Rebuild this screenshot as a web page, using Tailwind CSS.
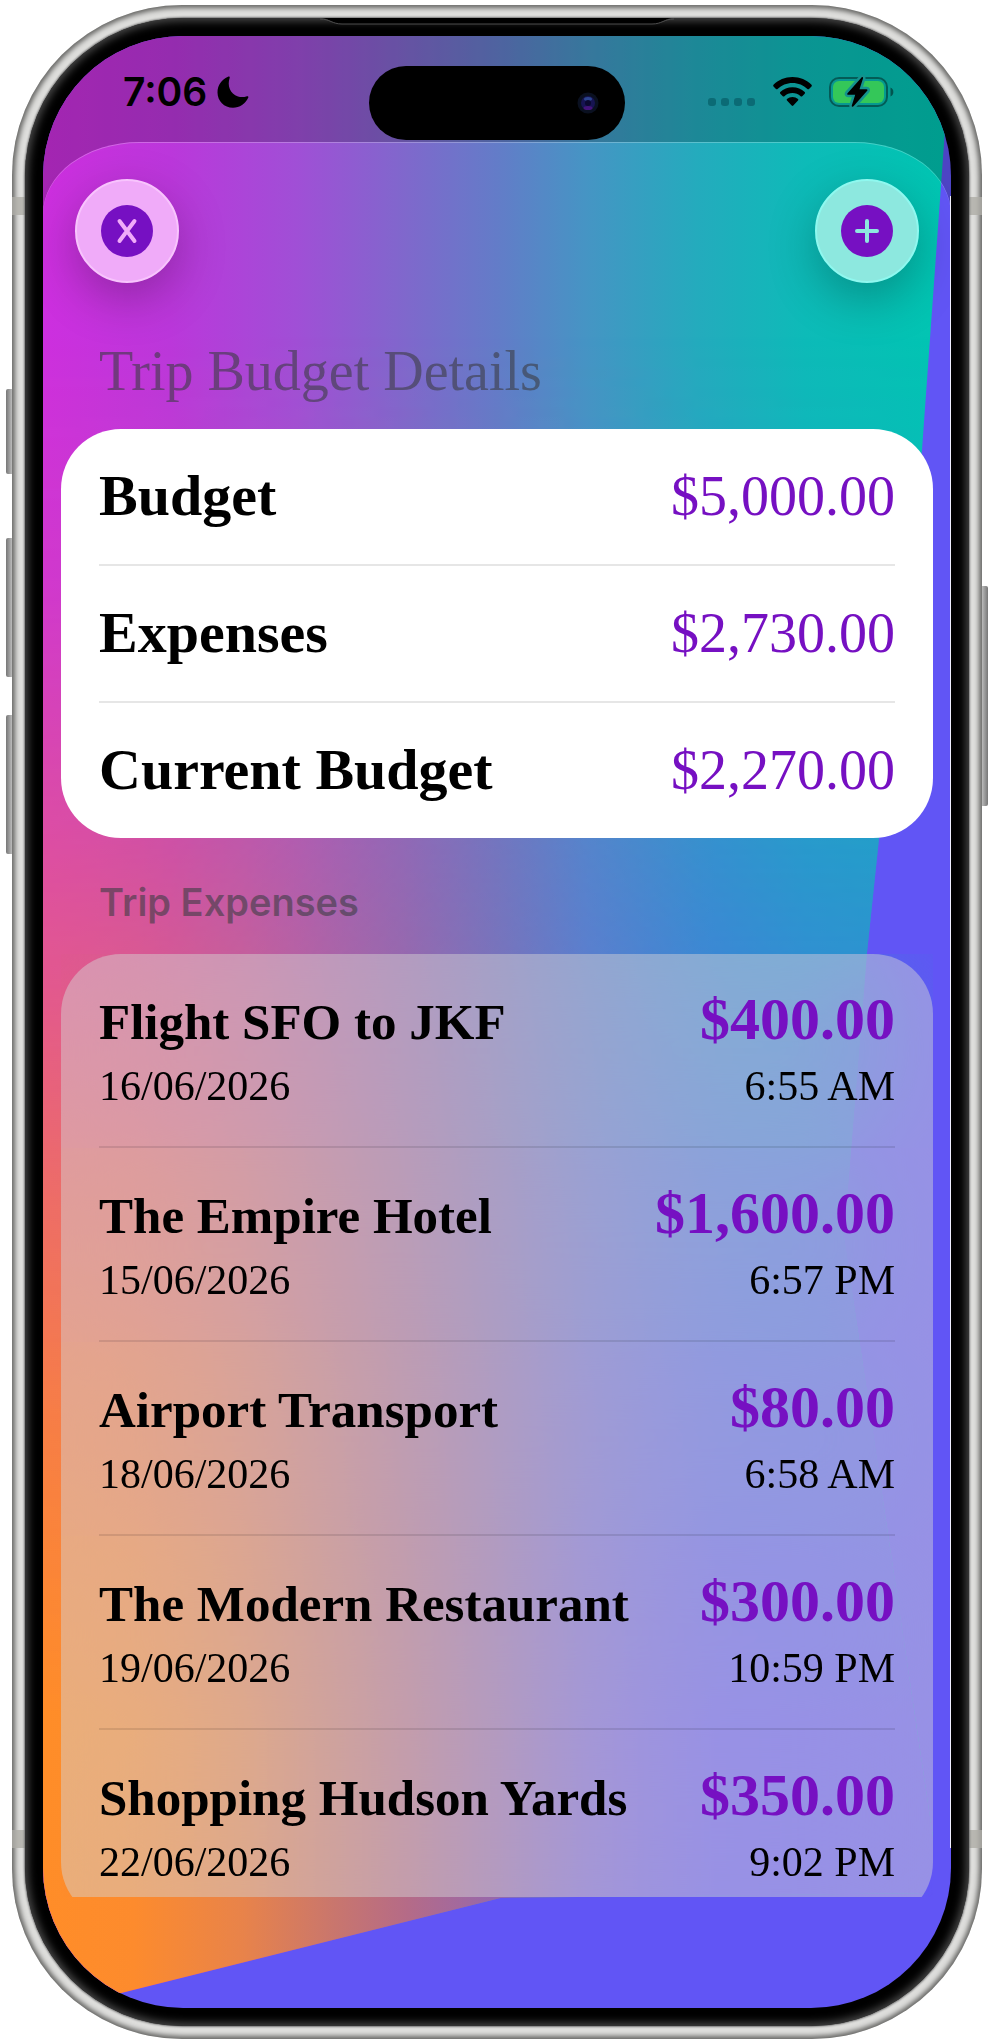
<!DOCTYPE html>
<html lang="en">
<head>
    <meta charset="UTF-8">
    <meta name="viewport" content="width=device-width, initial-scale=1.0">
    <title>Trip Budget Details</title>
    <script src="https://cdn.jsdelivr.net/npm/@tailwindcss/browser@4"></script>
</head>
<body class="bg-white font-['Liberation_Serif',serif] text-black">
    <main class="mx-auto w-full max-w-5xl px-3 pt-[5px] pb-1.5">
        <!-- Phone frame -->
        <div class="relative rounded-[170px] bg-[#dededc] p-[13px] shadow-[inset_0_0_5px_3px_#666664]">
            <!-- Side buttons -->
            <span class="absolute top-[384px] -left-1.5 h-[85px] w-1.5 rounded-l-xs bg-linear-to-r from-[#777] to-[#bbb]"></span>
            <span class="absolute top-[533px] -left-1.5 h-[139px] w-1.5 rounded-l-xs bg-linear-to-r from-[#777] to-[#bbb]"></span>
            <span class="absolute top-[710px] -left-1.5 h-[139px] w-1.5 rounded-l-xs bg-linear-to-r from-[#777] to-[#bbb]"></span>
            <span class="absolute top-[581px] -right-1.5 h-[220px] w-1.5 rounded-r-xs bg-linear-to-l from-[#777] to-[#bbb]"></span>
            <!-- Antenna bands -->
            <span class="absolute inset-x-0 top-[192px] h-[18px] bg-[#aeada6]/80"></span>
            <span class="absolute inset-x-0 bottom-[191px] h-[18px] bg-[#aeada6]/80"></span>

            <div class="relative rounded-[158px] bg-black p-[18px] shadow-[0_0_2px_1px_#777,inset_0_0_8px_3px_#4a4a4a]">
                <!-- Speaker slit -->
                <svg class="absolute top-0 left-1/2 -translate-x-1/2" width="354" height="8" viewBox="0 0 354 8" fill="none">
                    <path d="M2 0C10 1 12 6 22 6H332C342 6 344 1 352 0Z" fill="#000"/>
                    <path d="M0 1C10 1 12 6 22 6H332C342 6 344 1 354 1" stroke="#4d4d4d"/>
                </svg>

                <div class="relative overflow-hidden rounded-[140px] bg-[#6155f5]">
                    <!-- Mesh background -->
                    <svg class="absolute inset-0 size-full" viewBox="0 0 907 1971" preserveAspectRatio="none">
                        <defs>
                            <linearGradient id="meshTop">
                                <stop offset="0" stop-color="#cd2fdf"/>
                                <stop offset=".14" stop-color="#bb37db"/>
                                <stop offset=".28" stop-color="#a04fd6"/>
                                <stop offset=".4" stop-color="#7f68cc"/>
                                <stop offset=".5" stop-color="#637cc8"/>
                                <stop offset=".6" stop-color="#4595c4"/>
                                <stop offset=".72" stop-color="#24abbd"/>
                                <stop offset=".84" stop-color="#0dbbb8"/>
                                <stop offset="1" stop-color="#00c6b2"/>
                            </linearGradient>
                            <linearGradient id="meshBottom">
                                <stop offset="0" stop-color="#ff8d28"/>
                                <stop offset=".1" stop-color="#fd8b2d"/>
                                <stop offset=".22" stop-color="#e8834a"/>
                                <stop offset=".32" stop-color="#c9766d"/>
                                <stop offset=".4" stop-color="#b56b87"/>
                                <stop offset=".5" stop-color="#9668ac"/>
                                <stop offset=".6" stop-color="#7861dc"/>
                                <stop offset=".74" stop-color="#6155f5"/>
                                <stop offset="1" stop-color="#6155f5"/>
                            </linearGradient>
                            <linearGradient id="meshFade" x1="0" y1="0" x2="0" y2="1">
                                <stop offset=".15" stop-color="#fff" stop-opacity="0"/>
                                <stop offset=".28" stop-color="#fff" stop-opacity=".1"/>
                                <stop offset=".38" stop-color="#fff" stop-opacity=".28"/>
                                <stop offset=".48" stop-color="#fff" stop-opacity=".44"/>
                                <stop offset=".59" stop-color="#fff" stop-opacity=".66"/>
                                <stop offset=".7" stop-color="#fff" stop-opacity=".84"/>
                                <stop offset=".85" stop-color="#fff" stop-opacity="1"/>
                            </linearGradient>
                            <mask id="meshMask">
                                <rect width="907" height="1971" fill="url(#meshFade)"/>
                            </mask>
                            <clipPath id="meshShape">
                                <path d="M0 0H907L901 94L878 414L835 803L823 917L800 1200L889 1800V1856L457 1861L74 1957L0 1975Z"/>
                            </clipPath>
                        </defs>
                        <g clip-path="url(#meshShape)">
                            <rect width="907" height="1971" fill="url(#meshTop)"/>
                            <rect width="907" height="1971" fill="url(#meshBottom)" mask="url(#meshMask)"/>
                        </g>
                    </svg>

                    <!-- Status bar -->
                    <header class="relative z-10 grid h-[106px] grid-cols-[1fr_256px_1fr] items-start">
                        <div class="flex h-[112px] items-center gap-2.5 pl-20 font-['Inter',sans-serif] text-[39px] font-semibold">
                            <span>7:06</span>
                            <svg width="32" height="32" viewBox="0 0 32 32">
                                <path d="M11.500.6C12.300.2 13 .9 12.700 1.800C10 9.500 13 18 21 20.500C24 21.400 27 21.200 30 20.200C31 19.900 31.700 20.600 31.300 21.500C28.500 27.800 22.500 31.700 16 31.700C7 31.700.5 25 .5 16.500C.5 9.500 4.500 3.500 11.500.6Z"/>
                            </svg>
                        </div>
                        <div class="mt-[30px] flex h-[74px] items-center justify-end rounded-full bg-black pr-[26px]">
                            <svg width="22" height="22" viewBox="0 0 22 22">
                                <circle cx="11" cy="11" r="10.500" fill="#0a1020"/>
                                <circle cx="11" cy="11" r="7" fill="#171452"/>
                                <ellipse cx="11" cy="7" rx="4" ry="2" fill="#2c4590"/>
                                <ellipse cx="11" cy="16" rx="4.500" ry="2" fill="#43137a"/>
                                <circle cx="11" cy="11" r="3" fill="#0b0930"/>
                            </svg>
                        </div>
                        <div class="flex h-[112px] items-center justify-end pr-[57px]">
                            <div class="mt-5 mr-[18px] flex gap-[5px]">
                                <span class="size-2 rounded-[3px] bg-[#0b6b75]"></span>
                                <span class="size-2 rounded-[3px] bg-[#0b6b75]"></span>
                                <span class="size-2 rounded-[3px] bg-[#0b6b75]"></span>
                                <span class="size-2 rounded-[3px] bg-[#0b6b75]"></span>
                            </div>
                            <svg class="mr-[17px]" width="39" height="30" viewBox="0 0 39 30">
                                <path d="M19.500 0C27 0 33.700 3 38.500 7.800C39 8.300 39 8.900 38.500 9.400L36 11.900C35.500 12.400 34.900 12.400 34.400 11.900C30.500 8.200 25.300 5.900 19.500 5.900S8.500 8.200 4.600 11.900C4.100 12.400 3.500 12.400 3 11.900L.5 9.400C0 8.900 0 8.300.5 7.800C5.300 3 12 0 19.500 0Z"/>
                                <path d="M19.500 10.200C24.200 10.200 28.500 12 31.700 15.100C32.200 15.600 32.200 16.200 31.700 16.700L29.200 19.200C28.700 19.700 28.100 19.700 27.600 19.200C25.400 17.200 22.600 16 19.500 16S13.600 17.200 11.400 19.200C10.900 19.700 10.300 19.700 9.800 19.200L7.300 16.700C6.800 16.200 6.800 15.600 7.300 15.100C10.500 12 14.800 10.200 19.500 10.200Z"/>
                                <path d="M19.500 20C21.500 20 23.500 20.800 25 22C25.500 22.500 25.500 23.100 25 23.600L20.300 28.600C19.800 29.100 19.200 29.100 18.700 28.600L14 23.600C13.500 23.100 13.500 22.500 14 22C15.500 20.800 17.500 20 19.500 20Z"/>
                            </svg>
                            <svg width="65" height="34" viewBox="0 0 65 34">
                                <rect x="1" y="3" width="57" height="28" rx="9" fill="none" stroke="#000" stroke-opacity=".4" stroke-width="2"/>
                                <path d="M61.500 12.500C65.300 13.500 65.300 20.500 61.500 21.500Z" fill-opacity=".45"/>
                                <rect x="4" y="6" width="51" height="22" rx="6" fill="#34c759"/>
                                <path d="M32.500 2.500L18.500 18.200C17.900 19 18.200 19.800 19.200 19.800H26.200L22.800 30.500C22.500 31.800 23.700 32.200 24.500 31.300L38.200 15.800C38.800 15 38.500 14.200 37.500 14.200H30.500L34 3.500C34.300 2.200 33.300 1.600 32.500 2.500Z" stroke="#14918e" stroke-width="5" paint-order="stroke"/>
                            </svg>
                        </div>
                    </header>

                    <!-- Sheet, the outer shadow dims the strip behind it -->
                    <section class="relative rounded-t-[96px_72px] px-[18px] pt-[37px] pb-[111px] shadow-[inset_0_1px_0_rgba(255,255,255,0.25),0_0_0_200px_rgba(0,0,0,0.2)]">
                        <div class="flex justify-between px-3.5">
                            <button type="button" aria-label="Close" class="flex size-[104px] items-center justify-center rounded-full border-2 border-[#f8c4fd] bg-[#f0abf9] shadow-[0_16px_48px_rgba(0,0,0,0.25)]">
                                <svg width="52" height="52" viewBox="0 0 52 52" fill="none" stroke="#f0abf9" stroke-width="4" stroke-linecap="round">
                                    <circle cx="26" cy="26" r="26" fill="#7610c2" stroke="none"/>
                                    <path d="M18.500 16L33.500 36M33.500 16L18.500 36"/>
                                </svg>
                            </button>
                            <button type="button" aria-label="Add expense" class="flex size-[104px] items-center justify-center rounded-full border-2 border-[#8ff8ef] bg-[#8de8df] shadow-[0_16px_48px_rgba(0,0,0,0.25)]">
                                <svg width="52" height="52" viewBox="0 0 52 52" fill="none" stroke="#8de8df" stroke-width="4" stroke-linecap="round">
                                    <circle cx="26" cy="26" r="26" fill="#7610c2" stroke="none"/>
                                    <path d="M16 26H36M26 16V36"/>
                                </svg>
                            </button>
                        </div>

                        <h1 class="mt-14 mb-[26px] px-[38px] text-[56px] leading-[64px] text-[#3c3c43]/60">Trip Budget Details</h1>

                        <dl class="rounded-[60px] bg-white px-[38px]">
                            <div class="flex items-baseline justify-between border-b-2 border-[#e6e6e6] pt-[35px] pb-9 leading-[64px]">
                                <dt class="text-[58px] font-bold">Budget</dt>
                                <dd class="text-[56px] text-[#7610c2]">$5,000.00</dd>
                            </div>
                            <div class="flex items-baseline justify-between border-b-2 border-[#e6e6e6] pt-[35px] pb-9 leading-[64px]">
                                <dt class="text-[58px] font-bold">Expenses</dt>
                                <dd class="text-[56px] text-[#7610c2]">$2,730.00</dd>
                            </div>
                            <div class="flex items-baseline justify-between pt-[35px] pb-9 leading-[64px]">
                                <dt class="text-[58px] font-bold">Current Budget</dt>
                                <dd class="text-[56px] text-[#7610c2]">$2,270.00</dd>
                            </div>
                        </dl>

                        <h2 class="mt-10 mb-7 px-[38px] font-['Inter',sans-serif] text-[38px] leading-[48px] font-semibold text-[#3c3c43]/60">Trip Expenses</h2>

                        <div class="overflow-hidden">
                            <ul class="-mb-[25px] overflow-hidden rounded-[60px]">
                                <li class="bg-[#d5d4d5]/47 px-[38px] backdrop-blur-3xl">
                                    <div class="border-b-2 border-black/10 pt-[33px] pb-9">
                                        <div class="flex items-baseline justify-between leading-[64px] font-bold">
                                            <h3 class="text-[51px]">Flight SFO to JKF</h3>
                                            <span class="text-[60px] text-[#7610c2]">$400.00</span>
                                        </div>
                                        <div class="mt-2 flex justify-between text-[42px] leading-[48px]">
                                            <span>16/06/2026</span>
                                            <span>6:55 AM</span>
                                        </div>
                                    </div>
                                </li>
                                <li class="bg-[#d5d4d5]/47 px-[38px] backdrop-blur-3xl">
                                    <div class="border-b-2 border-black/10 pt-[33px] pb-9">
                                        <div class="flex items-baseline justify-between leading-[64px] font-bold">
                                            <h3 class="text-[51px]">The Empire Hotel</h3>
                                            <span class="text-[60px] text-[#7610c2]">$1,600.00</span>
                                        </div>
                                        <div class="mt-2 flex justify-between text-[42px] leading-[48px]">
                                            <span>15/06/2026</span>
                                            <span>6:57 PM</span>
                                        </div>
                                    </div>
                                </li>
                                <li class="bg-[#d5d4d5]/47 px-[38px] backdrop-blur-3xl">
                                    <div class="border-b-2 border-black/10 pt-[33px] pb-9">
                                        <div class="flex items-baseline justify-between leading-[64px] font-bold">
                                            <h3 class="text-[51px]">Airport Transport</h3>
                                            <span class="text-[60px] text-[#7610c2]">$80.00</span>
                                        </div>
                                        <div class="mt-2 flex justify-between text-[42px] leading-[48px]">
                                            <span>18/06/2026</span>
                                            <span>6:58 AM</span>
                                        </div>
                                    </div>
                                </li>
                                <li class="bg-[#d5d4d5]/47 px-[38px] backdrop-blur-3xl">
                                    <div class="border-b-2 border-black/10 pt-[33px] pb-9">
                                        <div class="flex items-baseline justify-between leading-[64px] font-bold">
                                            <h3 class="text-[51px]">The Modern Restaurant</h3>
                                            <span class="text-[60px] text-[#7610c2]">$300.00</span>
                                        </div>
                                        <div class="mt-2 flex justify-between text-[42px] leading-[48px]">
                                            <span>19/06/2026</span>
                                            <span>10:59 PM</span>
                                        </div>
                                    </div>
                                </li>
                                <li class="bg-[#d5d4d5]/47 px-[38px] backdrop-blur-3xl">
                                    <div class="pt-[33px] pb-9">
                                        <div class="flex items-baseline justify-between leading-[64px] font-bold">
                                            <h3 class="text-[51px]">Shopping Hudson Yards</h3>
                                            <span class="text-[60px] text-[#7610c2]">$350.00</span>
                                        </div>
                                        <div class="mt-2 flex justify-between text-[42px] leading-[48px]">
                                            <span>22/06/2026</span>
                                            <span>9:02 PM</span>
                                        </div>
                                    </div>
                                </li>
                            </ul>
                        </div>
                    </section>

                    <span class="absolute inset-y-[160px] right-0 w-px bg-white/90"></span>
                </div>
            </div>
        </div>
    </main>
</body>
</html>
